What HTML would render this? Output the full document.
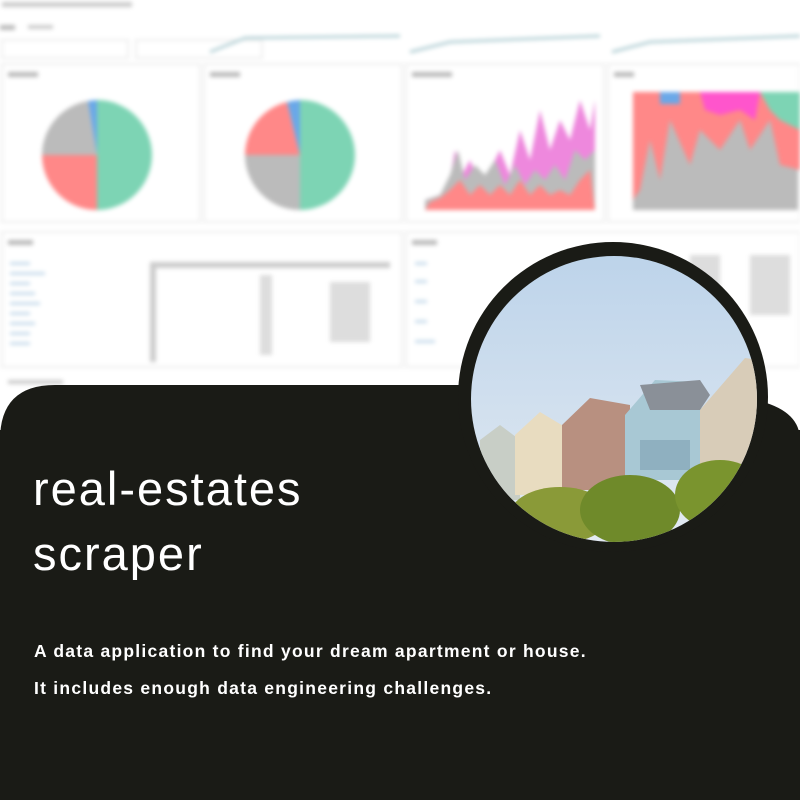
<!DOCTYPE html>
<html><head><style>
*{margin:0;padding:0;box-sizing:border-box}
body{width:800px;height:800px;overflow:hidden;background:#fff;position:relative;font-family:"Liberation Sans",sans-serif}
.bg{position:absolute;left:0;top:0;width:800px;height:400px;filter:blur(2px)}
.t{position:absolute;color:#fff;white-space:nowrap}
</style></head><body>
<svg class="bg" width="800" height="400" viewBox="0 0 800 400">
<rect width="800" height="400" fill="#fff"/>
<rect x="2" y="2" width="130" height="5" fill="#ccc"/>
<rect x="0" y="25" width="15" height="5" fill="#bbb"/><rect x="28" y="25" width="25" height="4" fill="#ccc"/>
<g fill="none" stroke="#eee" stroke-width="2">
<rect x="2" y="40" width="126" height="18"/><rect x="136" y="40" width="126" height="18"/>
<rect x="2" y="64" width="198" height="158"/><rect x="204" y="64" width="198" height="158"/>
<rect x="406" y="64" width="198" height="158"/><rect x="608" y="64" width="192" height="158"/>
<rect x="2" y="232" width="400" height="135"/><rect x="406" y="232" width="394" height="135"/>
</g>
<path d="M210 52 L245 38 L400 36" stroke="#b9d3d8" stroke-width="3" fill="none"/>
<path d="M410 52 L450 42 L600 36" stroke="#b9d3d8" stroke-width="3" fill="none"/>
<path d="M612 52 L650 42 L800 36" stroke="#b9d3d8" stroke-width="3" fill="none"/>
<rect x="8" y="72" width="30" height="5" fill="#bbb"/><rect x="210" y="72" width="30" height="5" fill="#bbb"/>
<rect x="412" y="72" width="40" height="5" fill="#bbb"/><rect x="614" y="72" width="20" height="5" fill="#bbb"/>
<g transform="translate(97,155)">
<path d="M0 0 L0 -55 A55 55 0 0 1 0 55 Z" fill="#7dd4b4"/>
<path d="M0 0 L0 55 A55 55 0 0 1 -55 0 Z" fill="#f88"/>
<path d="M0 0 L-55 0 A55 55 0 0 1 -9 -54 Z" fill="#bbb"/>
<path d="M0 0 L-9 -54 A55 55 0 0 1 0 -55 Z" fill="#6aa8e8"/>
</g>
<g transform="translate(300,155)">
<path d="M0 0 L0 -55 A55 55 0 0 1 0 55 Z" fill="#7dd4b4"/>
<path d="M0 0 L0 55 A55 55 0 0 1 -55 0 Z" fill="#bbb"/>
<path d="M0 0 L-55 0 A55 55 0 0 1 -13 -53 Z" fill="#f88"/>
<path d="M0 0 L-13 -53 A55 55 0 0 1 0 -55 Z" fill="#6aa8e8"/>
</g>
<path d="M425 210 L425 200 L440 195 L450 180 L455 150 L462 175 L470 160 L480 185 L490 170 L500 150 L510 175 L520 130 L530 160 L540 110 L550 150 L560 120 L570 140 L580 100 L590 130 L595 100 L595 210Z" fill="#ee88dd"/>
<path d="M425 210 L425 200 L440 195 L450 175 L458 150 L465 180 L475 165 L485 175 L495 160 L505 185 L515 165 L525 185 L535 170 L545 180 L555 165 L565 180 L575 150 L585 160 L595 150 L595 210Z" fill="#bbb"/>
<path d="M425 210 L430 202 L440 198 L450 190 L460 180 L470 195 L480 185 L490 195 L500 185 L510 195 L520 180 L530 195 L540 185 L550 195 L560 190 L570 195 L580 180 L590 170 L595 210Z" fill="#f88"/>
<rect x="633" y="92" width="165" height="118" fill="#bbb"/>
<path d="M633 92 L800 92 L800 170 L780 165 L770 120 L750 150 L740 120 L720 150 L700 130 L690 165 L670 120 L660 180 L650 140 L640 190 L633 200Z" fill="#f88"/>
<path d="M700 92 L760 92 L755 120 L740 110 L720 115 L705 110Z" fill="#f5c"/>
<path d="M760 92 L800 92 L800 130 L780 120 L770 110Z" fill="#7dd4b4"/>
<rect x="660" y="92" width="20" height="12" fill="#6aa8e8"/>
<rect x="150" y="262" width="240" height="6" fill="#ccc"/>
<rect x="150" y="262" width="6" height="100" fill="#ccc"/><rect x="260" y="275" width="12" height="80" fill="#ddd"/>
<rect x="330" y="282" width="40" height="60" fill="#ddd"/>
<rect x="690" y="255" width="30" height="60" fill="#ddd"/><rect x="750" y="255" width="40" height="60" fill="#ddd"/>
<g fill="#c8dcec"><rect x="10" y="262" width="20" height="3"/><rect x="10" y="272" width="35" height="3"/><rect x="10" y="282" width="20" height="3"/><rect x="10" y="292" width="25" height="3"/><rect x="10" y="302" width="30" height="3"/><rect x="10" y="312" width="20" height="3"/><rect x="10" y="322" width="25" height="3"/><rect x="10" y="332" width="20" height="3"/><rect x="10" y="342" width="20" height="3"/><rect x="415" y="262" width="12" height="3"/><rect x="415" y="280" width="12" height="3"/><rect x="415" y="300" width="12" height="3"/><rect x="415" y="320" width="12" height="3"/><rect x="415" y="340" width="20" height="3"/></g>
<rect x="8" y="240" width="25" height="5" fill="#bbb"/><rect x="412" y="240" width="25" height="5" fill="#bbb"/>
<rect x="8" y="380" width="55" height="4" fill="#ccc"/>
</svg>
<svg style="position:absolute;left:0;top:0" width="800" height="800">
<path d="M0 440 Q0 385 55 385 L470 385 L470 800 L0 800Z" fill="#1a1b16"/>
<path d="M700 395 Q800 395 800 440 L800 800 L700 800Z" fill="#1a1b16"/>
<rect x="0" y="430" width="800" height="370" fill="#1a1b16"/>
<circle cx="613" cy="397" r="155" fill="#1a1b16"/>
<defs><clipPath id="c"><circle cx="614" cy="399" r="143"/></clipPath>
<linearGradient id="sky" x1="0" y1="0" x2="0" y2="1"><stop offset="0" stop-color="#bcd3ea"/><stop offset="1" stop-color="#e4ebf2"/></linearGradient></defs>
<g clip-path="url(#c)">
<rect x="460" y="250" width="310" height="300" fill="url(#sky)"/>
<polygon points="480,440 500,425 520,440 520,500 480,500" fill="#c8cec6"/>
<polygon points="515,435 540,412 570,430 570,495 515,495" fill="#e8dcc0"/>
<polygon points="562,425 590,398 630,405 630,490 562,490" fill="#b89080"/>
<polygon points="625,415 655,380 700,382 705,480 625,480" fill="#a8c8d4"/>
<polygon points="640,385 700,380 710,395 700,410 650,410" fill="#8a9098"/>
<polygon points="700,410 745,358 760,360 760,470 700,470" fill="#d8ccb8"/>
<rect x="640" y="440" width="50" height="30" fill="#8fb0c0"/>
<ellipse cx="560" cy="515" rx="50" ry="28" fill="#8a9a38"/>
<ellipse cx="630" cy="510" rx="50" ry="35" fill="#6f8a2a"/>
<ellipse cx="720" cy="495" rx="45" ry="35" fill="#7a942e"/>
</g>
</svg>
<div class="t" style="left:33px;top:456px;font-size:47px;line-height:65px;font-weight:300;letter-spacing:2px">real-estates<br>scraper</div>
<div class="t" style="left:34px;top:633px;font-size:17.5px;line-height:37px;font-weight:bold;letter-spacing:1.25px">A data application to find your dream apartment or house.<br>It includes enough data engineering challenges.</div>
</body></html>
